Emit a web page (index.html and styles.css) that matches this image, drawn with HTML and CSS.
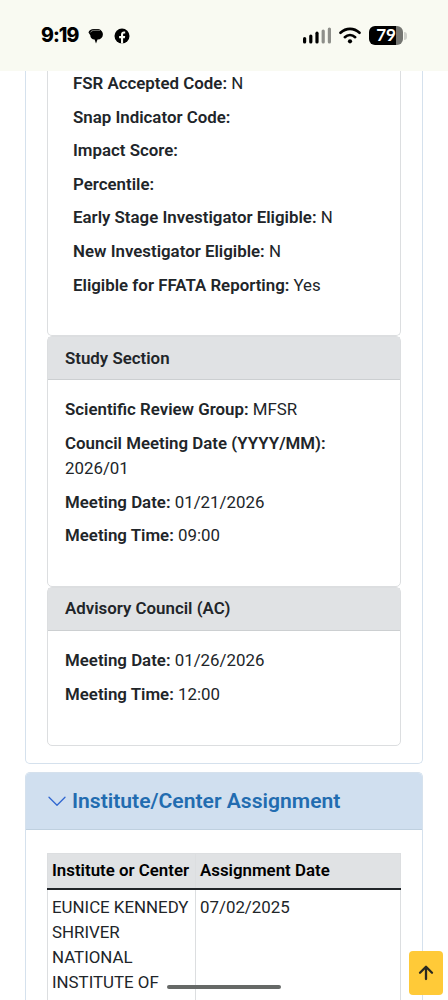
FILE: index.html
```html
<!DOCTYPE html>
<html lang="en">
<head>
    <meta charset="UTF-8">
    <meta name="viewport" content="width=device-width, initial-scale=1.0">
    <title>Status Information</title>
    <link rel="stylesheet" href="styles.css">
</head>
<body>

<header class="status-bar">
    <div class="status-left">
        <span class="clock">9:19</span>
        <svg class="chat-icon" width="16" height="16" viewBox="0 0 16 16">
            <path d="M.5 4.500C1 2.200 3 1 6 1h3c2 0 3.200.5 4 1.400 1.200.8 1.900 2.200 1.900 4 0 3-2.100 4.900-5.400 5.200L8 15.500l-1.400-3.900C4 11.300 2.300 9.700 2.300 7.200L.5 4.500z" fill="#000"/>
            <path d="M2.300 4.500C3.200 3 4.500 2.300 7 2.300h5" fill="none" stroke="#f9faf2" stroke-width=".5"/>
        </svg>
        <svg class="fb-icon" width="16" height="16" viewBox="0 0 16 16">
            <circle cx="8" cy="8" r="7.500" fill="#000"/>
            <path d="M7 15.600V10.200H5.100V8H7V6.500C7 4.500 8.200 3.500 10 3.500h1.200v1.900h-1c-.8 0-1.100.4-1.100 1.100V8h2.100l-.4 2.200H9.100v5.400z" fill="#f9faf2"/>
        </svg>
    </div>
    <div class="status-right">
        <svg width="29" height="17" viewBox="0 0 29 17" fill="#000">
            <rect x="0" y="10" width="3.200" height="6.500" rx="1.600"/>
            <rect x="6.200" y="7.500" width="3.200" height="9" rx="1.600"/>
            <rect x="12.400" y="4.600" width="3.200" height="11.900" rx="1.600"/>
            <rect x="18.600" y="2.500" width="3.200" height="14" rx="1.600" fill="#8e8f8a"/>
            <rect x="24.800" y=".5" width="3.200" height="16" rx="1.600" fill="#8e8f8a"/>
        </svg>
        <svg class="wifi" width="22" height="17" viewBox="0 0 22 17" fill="none" stroke="#000" stroke-width="2.600" stroke-linecap="round">
            <path d="M1.500 5.800C7 .5 15 .5 20.500 5.800"/>
            <path d="M5.800 10.200c3-2.900 7.400-2.900 10.400 0"/>
            <circle cx="11" cy="14.300" r="2.100" fill="#000" stroke="none"/>
        </svg>
        <span class="battery">79</span>
        <span class="battery-tip"></span>
    </div>
</header>

<main>
    <section class="panel panel-open">
        <div class="card card-top">
            <div class="card-body indent">
                <p><b>FSR Accepted Code:</b> N</p>
                <p><b>Snap Indicator Code:</b></p>
                <p><b>Impact Score:</b></p>
                <p><b>Percentile:</b></p>
                <p><b>Early Stage Investigator Eligible:</b> N</p>
                <p><b>New Investigator Eligible:</b> N</p>
                <p><b>Eligible for FFATA Reporting:</b> Yes</p>
            </div>
        </div>
        <div class="card">
            <div class="card-header">Study Section</div>
            <div class="card-body">
                <p><b>Scientific Review Group:</b> MFSR</p>
                <p><b>Council Meeting Date (YYYY/MM):</b> 2026/01</p>
                <p><b>Meeting Date:</b> 01/21/2026</p>
                <p><b>Meeting Time:</b> 09:00</p>
            </div>
        </div>
        <div class="card">
            <div class="card-header">Advisory Council (AC)</div>
            <div class="card-body">
                <p><b>Meeting Date:</b> 01/26/2026</p>
                <p><b>Meeting Time:</b> 12:00</p>
            </div>
        </div>
    </section>

    <section class="panel panel-last">
        <h2 class="panel-header">
            <svg width="18" height="11" viewBox="0 0 18 11" fill="none" stroke="#2f66d0" stroke-width="1.300" stroke-linecap="round" stroke-linejoin="round">
                <path d="M1 1.200l8 8 8-8"/>
            </svg>
            Institute/Center Assignment
        </h2>
        <div class="panel-body">
            <table>
                <thead>
                    <tr><th class="institute">Institute or Center</th><th>Assignment Date</th></tr>
                </thead>
                <tbody>
                    <tr><td>EUNICE KENNEDY SHRIVER NATIONAL INSTITUTE OF</td><td>07/02/2025</td></tr>
                </tbody>
            </table>
        </div>
    </section>
</main>

<button class="to-top" aria-label="Back to top">
    <svg width="16" height="16" viewBox="0 0 16 16" fill="none" stroke="#2b2a20" stroke-width="2.300" stroke-linecap="round" stroke-linejoin="round">
        <path d="M8 14V2M2 7.800l6-6L14 7.800"/>
    </svg>
</button>
<div class="home-bar"></div>

</body>
</html>
```

FILE: styles.css
```css
* {
    box-sizing: border-box;
}

body {
    margin: 0;
    background-color: #fff;
    color: #212529;
    font-family: Roboto, sans-serif;
    font-size: 16.86px;
    line-height: 25.2px;
}

.status-bar {
    display: flex;
    justify-content: space-between;
    height: 71px;
    padding: 0 41px;
    background-color: #f9faf2;
    color: #000;
}

.status-left,
.status-right {
    display: flex;
    align-items: center;
    height: 71px;
}

.clock {
    width: 47px;
    font-family: Inter, sans-serif;
    font-size: 19.5px;
    font-weight: 800;
    letter-spacing: -1px;
}

.fb-icon {
    margin-left: 10px;
}

.wifi {
    margin: 0 8px 0 7px;
}

.battery {
    width: 34px;
    height: 19px;
    border-radius: 6px;
    background: linear-gradient(to right, #000 80%, #747571 80%);
    color: #fff;
    font-family: Lato, sans-serif;
    font-size: 17px;
    font-weight: 700;
    line-height: 18px;
    text-align: center;
}

.battery-tip {
    width: 3px;
    height: 8px;
    margin-left: 1px;
    border-radius: 0 3px 3px 0;
    background-color: #cfd0ca;
}

.panel {
    width: 398px;
    margin: 0 0 8px 25px;
    border: 1px solid #d5e1ed;
    border-radius: 5px;
}

.panel-open {
    padding: 0 21px 17px;
    border-top: none;
    border-radius: 0 0 5px 5px;
}

.panel-last {
    margin-bottom: 0;
    border-bottom: none;
    border-radius: 5px 5px 0 0;
}

.card {
    border: 1px solid #dcdee0;
    border-radius: 5px;
}

.card-top {
    border-top: none;
    border-radius: 0 0 5px 5px;
}

.card-header {
    height: 43px;
    padding: 8.4px 17px;
    border-bottom: 1px solid #cccfd1;
    background-color: #e0e2e4;
    font-weight: 600;
}

.card-body {
    padding: 17px 17px 29.3px;
}

.card-body.indent {
    padding: 0 25px 29px;
}

p {
    margin: 0 0 8.4px;
}

b,
th {
    font-weight: 600;
}

.panel-header {
    display: flex;
    align-items: center;
    gap: 6px;
    height: 57px;
    margin: 0;
    padding: 1px 0 0 22px;
    border-bottom: 1px solid #bfd0df;
    border-radius: 4px 4px 0 0;
    background-color: #d0dfef;
    color: #226cb0;
    font-size: 21.1px;
    font-weight: 600;
}

.panel-body {
    height: 170px;
    padding: 23px 21px 0;
    overflow: hidden;
}

table {
    width: 354px;
    border-collapse: collapse;
    table-layout: fixed;
}

th,
td {
    height: 112px;
    padding: 4px 4px 5px;
    border: 1px solid #dcdee0;
    text-align: left;
    vertical-align: top;
    line-height: 25.2px;
}

th {
    height: 35px;
    border-bottom: 2px solid #212529;
    background-color: #e0e2e4;
    color: #000;
}

td {
    padding-top: 5px;
    border-bottom: none;
}

.institute {
    width: 148px;
}

.to-top {
    position: fixed;
    left: 409px;
    top: 951px;
    display: flex;
    align-items: center;
    justify-content: center;
    width: 34px;
    height: 44px;
    padding: 0;
    border: none;
    border-radius: 4px;
    background-color: #ffca38;
}

.home-bar {
    position: fixed;
    left: 167px;
    top: 985px;
    width: 114px;
    height: 4px;
    border-radius: 2px;
    background-color: #666967;
}
```
